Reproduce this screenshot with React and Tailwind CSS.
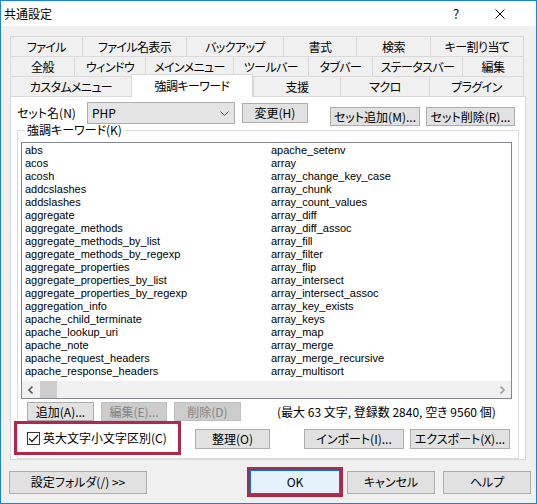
import React from "react";

const FONT = "font-['Noto_Sans_CJK_JP','Noto_Sans_CJK_SC',sans-serif] [font-feature-settings:'palt']";

const row1 = [
  ["ファイル", "w-[72px]"],
  ["ファイル名表示", "w-[104px]"],
  ["バックアップ", "w-[97px]"],
  ["書式", "w-[73px]"],
  ["検索", "w-[74px]"],
  ["キー割り当て", "w-[94px]"],
];
const row2 = [
  ["全般", "w-[64px]"],
  ["ウィンドウ", "w-[71px]"],
  ["メインメニュー", "w-[88px]"],
  ["ツールバー", "w-[75px]"],
  ["タブバー", "w-[64px]"],
  ["ステータスバー", "w-[90px]"],
  ["編集", "w-[62px]"],
];
const row3 = [
  ["カスタムメニュー", "w-[121px]", false],
  ["強調キーワード", "w-[122px]", true],
  ["支援", "w-[87px]", false],
  ["マクロ", "w-[89px]", false],
  ["プラグイン", "w-[95px]", false],
];

const col1 = [
  "abs", "acos", "acosh", "addcslashes", "addslashes", "aggregate",
  "aggregate_methods", "aggregate_methods_by_list", "aggregate_methods_by_regexp",
  "aggregate_properties", "aggregate_properties_by_list", "aggregate_properties_by_regexp",
  "aggregation_info", "apache_child_terminate", "apache_lookup_uri", "apache_note",
  "apache_request_headers", "apache_response_headers",
];
const col2 = [
  "apache_setenv", "array", "array_change_key_case", "array_chunk", "array_count_values",
  "array_diff", "array_diff_assoc", "array_fill", "array_filter", "array_flip",
  "array_intersect", "array_intersect_assoc", "array_key_exists", "array_keys",
  "array_map", "array_merge", "array_merge_recursive", "array_multisort",
];

function TabRow({ tabs }) {
  return (
    <div className="flex h-[20px]">
      {tabs.map(([label, w], i) => (
        <div
          key={label}
          className={`${w} h-[20px] border-t border-l border-[#d9d9d9] bg-[#f0f0f0] flex items-center justify-center text-[12px] tracking-[-0.6px] text-black ${i === tabs.length - 1 ? "border-r" : ""}`}
        >
          {label}
        </div>
      ))}
    </div>
  );
}

function Btn({ children, className = "", disabled = false }) {
  return (
    <div
      className={`flex items-center justify-center border text-[12px] leading-none ${disabled ? "bg-[#cccccc] border-[#bfbfbf] text-[#838383]" : "bg-[#e1e1e1] border-[#adadad] text-black"} ${className}`}
    >
      {children}
    </div>
  );
}

export default function App() {
  return (
    <div className={`w-[537px] h-[504px] border border-[#1883d7] bg-[#f0f0f0] flex flex-col overflow-hidden ${FONT}`}>
      {/* title bar */}
      <div className="h-[25px] bg-white flex items-center shrink-0">
        <div className="pl-[3px] text-[12px] text-black">共通設定</div>
        <div className="ml-auto w-[20px] text-center text-[13px] text-black mr-[29px]">?</div>
        <svg width="10" height="10" viewBox="0 0 10 10" className="mr-[31px]">
          <path d="M0.5 0.5 L9.5 9.5 M9.5 0.5 L0.5 9.5" stroke="#000" strokeWidth="1" />
        </svg>
      </div>

      {/* tabs */}
      <div className="ml-[9px] mt-[10px] w-[515px]">
        <TabRow tabs={row1} />
        <TabRow tabs={row2} />
        <div className="flex h-[20px]">
          {row3.map(([label, w, sel], i) =>
            sel ? (
              <div
                key={label}
                className={`${w} h-[23px] -mt-[2px] relative z-10 bg-white border-t border-l border-r border-[#d9d9d9] flex items-center justify-center text-[12px] tracking-[-0.6px] text-black pb-[1px]`}
              >
                {label}
              </div>
            ) : (
              <div
                key={label}
                className={`${w} h-[20px] border-t border-l border-[#d9d9d9] bg-[#f0f0f0] flex items-center justify-center text-[12px] tracking-[-0.6px] text-black ${i === row3.length - 1 ? "border-r" : ""}`}
              >
                {label}
              </div>
            )
          )}
        </div>

        {/* panel */}
        <div className="w-[516px] h-[364px] bg-white border border-[#d9d9d9] flex flex-col">
          {/* set row */}
          <div className="flex items-start pt-[5px]">
            <div className="w-[76px] pl-[6px] h-[22px] flex items-center text-[12px] text-black">セット名(N)</div>
            <div className="w-[148px] h-[22px] bg-[#e5e5e5] border border-[#acacac] flex items-center pl-[4px] text-[12px] text-black">
              PHP
              <svg width="9" height="5" viewBox="0 0 9 5" className="ml-auto mr-[5px]">
                <path d="M0.5 0.5 L4.5 4.5 L8.5 0.5" stroke="#606060" fill="none" strokeWidth="1" />
              </svg>
            </div>
            <Btn className="w-[66px] h-[20px] mt-[1px] ml-[7px]">変更(H)</Btn>
            <Btn className="w-[90px] h-[19px] mt-[5px] ml-[22px]">セット追加(M)...</Btn>
            <Btn className="w-[89px] h-[19px] mt-[5px] ml-[6px]">セット削除(R)...</Btn>
          </div>

          {/* group */}
          <fieldset className="mx-[6px] -mt-[3px] border border-[#dcdcdc] h-[336px] flex flex-col">
            <legend className="ml-[7px] px-[2px] text-[12px] leading-[14px] text-black">強調キーワード(K)</legend>
            <div className="ml-[3px] mt-[5px] w-[491px] h-[257px] border border-[#828790] bg-white flex flex-col">
              <div className="flex pt-[1px] h-[238px] font-['Liberation_Sans',Arial,sans-serif] text-[11px] leading-[13px] text-black">
                <div className="w-[249px] pl-[3px]">
                  {col1.map((t) => (
                    <div key={t} className="h-[13px] whitespace-nowrap">{t}</div>
                  ))}
                </div>
                <div>
                  {col2.map((t) => (
                    <div key={t} className="h-[13px] whitespace-nowrap">{t}</div>
                  ))}
                </div>
              </div>
              <div className="h-[17px] bg-[#f0f0f0] flex items-center">
                <div className="w-[17px] h-[17px] flex items-center justify-center">
                  <svg width="5" height="8" viewBox="0 0 5 8">
                    <path d="M4.5 0.5 L1 4 L4.5 7.5" stroke="#606060" strokeWidth="1.6" fill="none" />
                  </svg>
                </div>
                <div className="w-[17px] h-[17px] bg-[#cdcdcd] ml-[1px]" />
                <div className="ml-auto w-[17px] h-[17px] flex items-center justify-center">
                  <svg width="5" height="8" viewBox="0 0 5 8">
                    <path d="M0.5 0.5 L4 4 L0.5 7.5" stroke="#a0a0a0" strokeWidth="1.6" fill="none" />
                  </svg>
                </div>
              </div>
            </div>

            {/* edit buttons row */}
            <div className="flex items-center mt-[3px] h-[19px]">
              <Btn className="w-[67px] h-[19px] ml-[9px]">追加(A)...</Btn>
              <Btn disabled className="w-[66px] h-[19px] ml-[7px]">編集(E)...</Btn>
              <Btn disabled className="w-[67px] h-[19px] ml-[7px]">削除(D)</Btn>
              <div className="ml-[36px] text-[12px] text-black whitespace-nowrap">(最大 63 文字, 登録数 2840, 空き 9560 個)</div>
            </div>

            {/* checkbox row */}
            <div className="flex items-center -ml-[4px] h-[34px]">
              <div className="w-[167px] h-[34px] border-[3px] border-[#b0284a] flex items-center pl-[10px]">
                <div className="w-[13px] h-[13px] border border-[#333333] bg-white flex items-center justify-center">
                  <svg width="11" height="9" viewBox="0 0 11 9">
                    <path d="M1 4.5 L4 7.5 L10 1" stroke="#222" strokeWidth="1.3" fill="none" />
                  </svg>
                </div>
                <span className="ml-[3px] text-[12px] text-black">英大文字小文字区別(C)</span>
              </div>
              <Btn className="w-[75px] h-[20px] ml-[14px] mt-[2px]">整理(O)</Btn>
              <Btn className="w-[100px] h-[20px] ml-[34px] mt-[2px]">インポート(I)...</Btn>
              <Btn className="w-[100px] h-[20px] ml-[6px] mt-[2px]">エクスポート(X)...</Btn>
            </div>
          </fieldset>
        </div>
      </div>

      {/* bottom buttons */}
      <div className="flex items-center mt-[7px] pl-[8px]">
        <Btn className="w-[138px] h-[23px]">設定フォルダ(/) &gt;&gt;</Btn>
        <div className="ml-[100px] border-[3px] border-[#b0284a]">
          <div className="w-[90px] h-[24px] bg-[#e5f1fb] border border-[#0078d7] flex items-center justify-center text-[12px] text-black">OK</div>
        </div>
        <Btn className="w-[88px] h-[23px] ml-[4px]">キャンセル</Btn>
        <Btn className="w-[88px] h-[23px] ml-[8px]">ヘルプ</Btn>
      </div>
    </div>
  );
}
